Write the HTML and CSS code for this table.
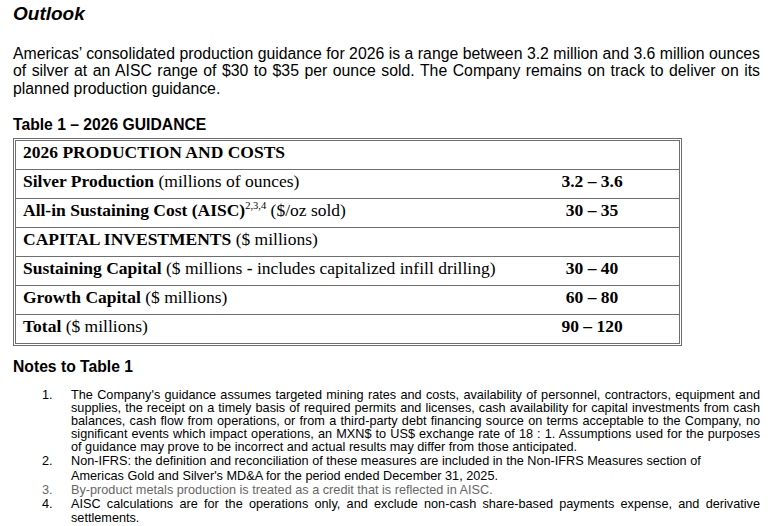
FILE: index.html
```html
<!DOCTYPE html>
<html>
<head>
<meta charset="utf-8">
<link rel="stylesheet" href="styles.css">
</head>
<body>
<div class="page">
  <h1 class="title">Outlook</h1>
  <p class="intro">Americas’ consolidated production guidance for 2026 is a range between 3.2 million and 3.6 million ounces of silver at an AISC range of $30 to $35 per ounce sold. The Company remains on track to deliver on its planned production guidance.</p>
  <h2 class="subtitle">Table 1 – 2026 GUIDANCE</h2>
  <div class="table-frame">
    <table class="guidance">
      <colgroup><col class="col-label"><col class="col-value"></colgroup>
      <tr><td class="label"><b>2026 PRODUCTION AND COSTS</b></td><td class="value"></td></tr>
      <tr><td class="label"><b>Silver Production</b> (millions of ounces)</td><td class="value"><b>3.2 – 3.6</b></td></tr>
      <tr><td class="label"><b>All-in Sustaining Cost (AISC)</b><sup>2,3,4</sup> ($/oz sold)</td><td class="value"><b>30 – 35</b></td></tr>
      <tr><td class="label"><b>CAPITAL INVESTMENTS</b> ($ millions)</td><td class="value"></td></tr>
      <tr><td class="label"><b>Sustaining Capital</b> ($ millions <b>-</b> includes capitalized infill drilling)</td><td class="value"><b>30 – 40</b></td></tr>
      <tr><td class="label"><b>Growth Capital</b> ($ millions)</td><td class="value"><b>60 – 80</b></td></tr>
      <tr><td class="label"><b>Total</b> ($ millions)</td><td class="value"><b>90 – 120</b></td></tr>
    </table>
  </div>
  <h2 class="subtitle notes-title">Notes to Table 1</h2>
  <ol class="notes">
    <li class="note n1 justify"><span class="num">1.</span><span class="txt">The Company's guidance assumes targeted mining rates and costs, availability of personnel, contractors, equipment and supplies, the receipt on a timely basis of required permits and licenses, cash availability for capital investments from cash balances, cash flow from operations, or from a third-party debt financing source on terms acceptable to the Company, no significant events which impact operations, an MXN$ to US$ exchange rate of 18 : 1. Assumptions used for the purposes of guidance may prove to be incorrect and actual results may differ from those anticipated.</span></li>
    <li class="note n2"><span class="num">2.</span><span class="txt">Non-IFRS: the definition and reconciliation of these measures are included in the Non-IFRS Measures section of<br>Americas Gold and Silver's MD&amp;A for the period ended December 31, 2025.</span></li>
    <li class="note n3 muted"><span class="num">3.</span><span class="txt">By-product metals production is treated as a credit that is reflected in AISC.</span></li>
    <li class="note n4 justify"><span class="num">4.</span><span class="txt">AISC calculations are for the operations only, and exclude non-cash share-based payments expense, and derivative settlements.</span></li>
  </ol>
</div>
</body>
</html>
```
FILE: styles.css
```css
html, body {
  margin: 0;
  padding: 0;
  background: #ffffff;
}
.page {
  padding: 3px 18px 0 13px;
  color: #000;
  font-family: "Liberation Sans", Arial, sans-serif;
}
.title {
  margin: 0;
  font-size: 19px;
  line-height: 22px;
  font-weight: bold;
  font-style: italic;
}
.intro {
  margin: 20px 0 0 0;
  width: 747px;
  font-size: 15.8px;
  line-height: 17.3px;
  text-align: justify;
}
.subtitle {
  margin: 19px 0 0 0;
  font-size: 15.7px;
  line-height: 18px;
  font-weight: bold;
}
.table-frame {
  margin-top: 4px;
  width: 663px;
  border: 3px double #6e6e6e;
}
.guidance {
  width: 100%;
  border-collapse: collapse;
  font-family: "Liberation Serif", "Times New Roman", serif;
  font-size: 17.5px;
  color: #000;
}
.col-label { width: 486px; }
.guidance td {
  height: 28px;
  padding: 1px 0 7px 7px;
  line-height: 20px;
  vertical-align: top;
  box-sizing: border-box;
  white-space: nowrap;
}
.guidance tr + tr td {
  border-top: 1px solid #6e6e6e;
}
.guidance td.value {
  text-align: center;
  padding-left: 3px;
}
.guidance sup {
  font-size: 10.5px;
  line-height: 0;
  vertical-align: 7px;
}
.notes-title {
  margin-top: 12px;
}
.notes {
  list-style: none;
  margin: 13px 0 0 0;
  padding: 0;
  width: 747px;
  font-size: 12.7px;
}
.note {
  display: flex;
}
.note .num {
  width: 58px;
  flex: none;
  padding-left: 29px;
  box-sizing: border-box;
}
.note .txt {
  flex: 1;
}
.note.justify .txt {
  text-align: justify;
}
.note.n1 {
  line-height: 12.9px;
}
.note.n2 {
  line-height: 15px;
  margin-top: 1px;
}
.note.n3 {
  line-height: 12.6px;
}
.note.n4 {
  line-height: 14px;
}
.note.muted {
  color: #666666;
}
```
